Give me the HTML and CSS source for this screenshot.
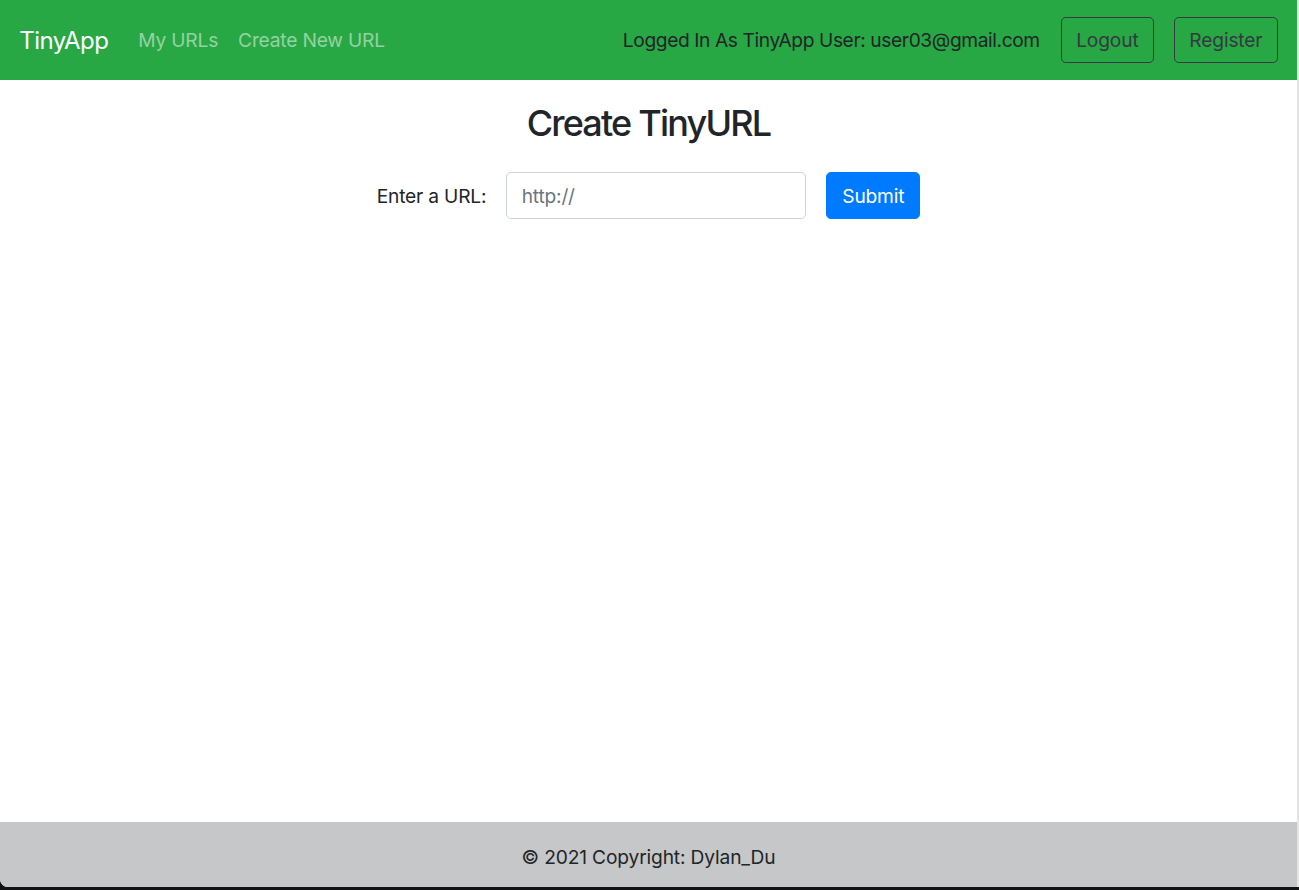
FILE: index.html
```html
<!DOCTYPE html>
<html lang="en">
<head>
<meta charset="utf-8">
<title>TinyApp</title>
<link rel="stylesheet" href="styles.css">
</head>
<body>
<div class="window">
  <nav class="navbar">
    <a class="brand" href="#">TinyApp</a>
    <div class="nav-links">
      <a class="nav-link" href="#">My URLs</a>
      <a class="nav-link" href="#">Create New URL</a>
    </div>
    <div class="nav-right">
      <span class="user-text">Logged In As TinyApp User: user03@gmail.com</span>
      <button class="btn-outline" type="button">Logout</button>
      <button class="btn-outline" type="button">Register</button>
    </div>
  </nav>
  <main class="main">
    <h2 class="title">Create TinyURL</h2>
    <form class="url-form">
      <label class="form-label" for="longURL">Enter a URL:</label>
      <input class="form-input" id="longURL" type="text" placeholder="http://">
      <button class="btn-primary" type="submit">Submit</button>
    </form>
  </main>
  <footer class="footer">© 2021 Copyright: Dylan_Du</footer>
</div>
</body>
</html>
```
FILE: styles.css
```css
html, body {
  margin: 0;
  padding: 0;
  background: #121212;
  height: 100%;
}
body {
  font-family: Inter, "Noto Sans", "Liberation Sans", sans-serif;
  font-size: 19.2px;
  color: #212529;
}
.window {
  width: 1297px;
  height: 887px;
  background: #fff;
  border-right: 2px solid #e4e4e4;
  display: flex;
  flex-direction: column;
  border-bottom-left-radius: 8px;
  overflow: hidden;
}
.navbar {
  height: 80px;
  flex: 0 0 80px;
  background: #28a745;
  display: flex;
  align-items: center;
  padding: 0 19.2px;
  box-sizing: border-box;
  letter-spacing: -0.4px;
}
.brand {
  font-size: 24px;
  color: #fff;
  text-decoration: none;
  margin-right: 20px;
  letter-spacing: -0.55px;
}
.nav-links {
  display: flex;
}
.nav-link {
  color: rgba(255, 255, 255, 0.5);
  text-decoration: none;
  padding: 0 10px;
  letter-spacing: -0.2px;
}
.nav-right {
  margin-left: auto;
  display: flex;
  align-items: center;
}
.user-text {
  color: #212529;
  margin-right: 21px;
}
.btn-outline {
  font: inherit;
  letter-spacing: -0.15px;
  height: 46px;
  padding: 0 14.4px;
  background: transparent;
  border: 1px solid #343a40;
  color: #343a40;
  border-radius: 4.8px;
}
.btn-outline + .btn-outline {
  margin-left: 20px;
}
.main {
  flex: 1;
  display: flex;
  flex-direction: column;
  align-items: center;
}
.title {
  font-size: 36px;
  font-weight: 500;
  line-height: 1.2;
  letter-spacing: -1.8px;
  margin: 22px 0 0;
}
.url-form {
  display: flex;
  align-items: center;
  gap: 20px;
  margin-top: 27px;
  letter-spacing: -0.2px;
}
.form-input {
  font: inherit;
  letter-spacing: inherit;
  width: 300px;
  height: 47px;
  box-sizing: border-box;
  border: 1px solid #ced4da;
  border-radius: 4.8px;
  padding: 0 14.4px;
  color: #495057;
}
.form-input::placeholder {
  color: #6c757d;
}
.btn-primary {
  font: inherit;
  letter-spacing: inherit;
  height: 47px;
  padding: 0 15px;
  background: #007bff;
  border: 1px solid #007bff;
  color: #fff;
  border-radius: 4.8px;
}
.footer {
  flex: 0 0 65px;
  background: #c6c7c8;
  display: flex;
  align-items: center;
  justify-content: center;
  padding-top: 4px;
  box-sizing: border-box;
  letter-spacing: -0.15px;
}
```
